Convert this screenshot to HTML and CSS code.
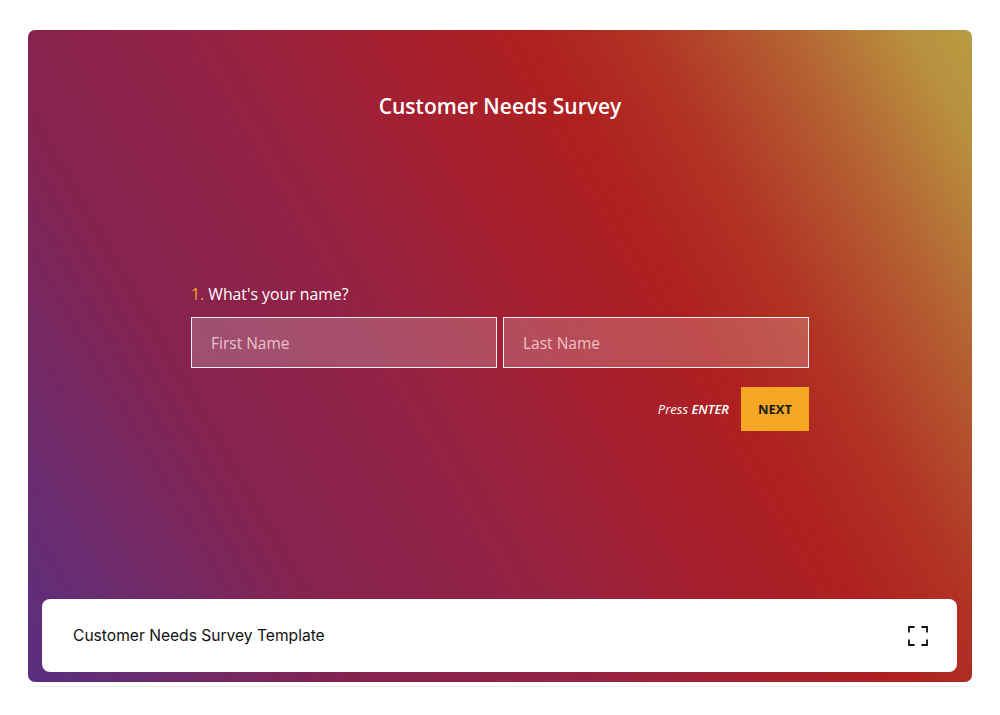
FILE: index.html
```html
<!DOCTYPE html>
<html>
<head>
<meta charset="utf-8">
<link rel="stylesheet" href="styles.css">
</head>
<body>
<div class="wrap">
  <div class="card">
    <h1 class="title">Customer Needs Survey</h1>
    <div class="form">
      <div class="question"><span class="num">1.</span> What's your name?</div>
      <div class="inputs">
        <input class="field" type="text" placeholder="First Name">
        <input class="field" type="text" placeholder="Last Name">
      </div>
      <div class="actions">
        <span class="hint">Press <b>ENTER</b></span>
        <button class="next">NEXT</button>
      </div>
    </div>
    <div class="bar">
      <span class="bar-title">Customer Needs Survey Template</span>
      <svg class="fs" width="20" height="20" viewBox="0 0 20 20" fill="none" stroke="#111" stroke-width="1.8">
        <path d="M1 6.5V1h5.5M13.5 1H19v5.5M19 13.5V19h-5.5M6.5 19H1v-5.5"/>
      </svg>
    </div>
  </div>
</div>
</body>
</html>
```
FILE: styles.css
```css
* { box-sizing: border-box; }
html, body { margin: 0; padding: 0; background: #fff; }
body { font-family: "Open Sans", "Noto Sans", sans-serif; }
.wrap {
  padding: 30px 28px 0;
  width: 1000px;
}
.wrap::after {
  content: "";
  display: block;
  height: 4px;
  border-bottom: 1px solid #ececec;
}
.card {
  height: 652px;
  border-radius: 7px;
  background: linear-gradient(60deg, #5a2f80 0%, #6e2a6a 12%, #85234f 25%, #922246 40%, #a6202e 56%, #ae2020 66%, #b13424 75%, #b45e32 85%, #b8903e 95%, #b89c42 100%);
  display: flex;
  flex-direction: column;
  padding: 62px 0 10px;
  color: #fff;
}
.title {
  margin: 0;
  text-align: center;
  font-size: 21px;
  line-height: 28px;
  font-weight: 600;
}
.form {
  margin: 164px auto 0;
  width: 618px;
}
.question {
  font-size: 15.8px;
  line-height: 20px;
}
.num { color: #f5a623; }
.inputs {
  display: flex;
  gap: 6px;
  margin-top: 13px;
}
.field {
  flex: 1;
  height: 51px;
  border: 1.5px solid rgba(255,255,255,0.9);
  background: rgba(255,255,255,0.2);
  color: #fff;
  font-family: "Open Sans", sans-serif;
  font-size: 15.5px;
  padding: 0 19px;
  outline: none;
}
.field::placeholder { color: rgba(255,225,230,0.8); }
.actions {
  display: flex;
  justify-content: flex-end;
  align-items: center;
  gap: 12px;
  margin-top: 19px;
}
.hint {
  font-style: italic;
  font-size: 13px;
}
.hint b { font-weight: 600; }
.next {
  width: 68px;
  height: 44px;
  border: none;
  background: #f5a623;
  color: #1a1a1a;
  font-family: "Open Sans", sans-serif;
  font-weight: 700;
  font-size: 13px;
  padding: 0;
}
.bar {
  margin: auto 15px 0 14px;
  height: 73px;
  background: #fff;
  border-radius: 8px;
  display: flex;
  align-items: center;
  justify-content: space-between;
  padding: 0 29px 0 31px;
  color: #111;
}
.bar-title {
  font-family: "Inter", "Noto Sans", sans-serif;
  font-size: 15.6px;
  color: #111;
}
.fs { display: block; }
```
